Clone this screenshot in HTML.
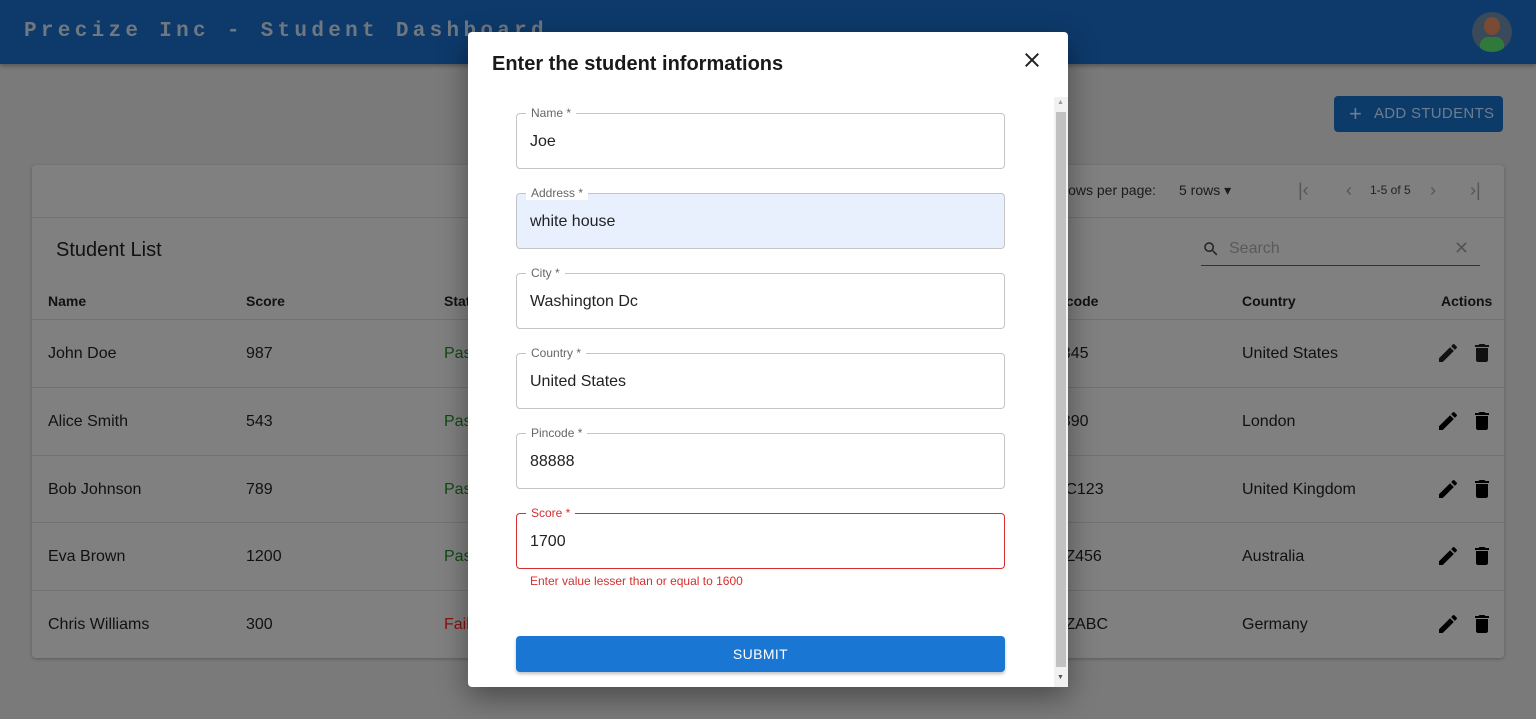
<!DOCTYPE html>
<html><head><meta charset="utf-8"><style>
*{box-sizing:border-box;margin:0;padding:0}
body{width:1536px;height:719px;overflow:hidden;background:#7a7a7a;font-family:"Liberation Sans",sans-serif;position:relative}
.abs{position:absolute}
.hdr{left:0;top:0;width:1536px;height:64px;background:#0d3a6b;box-shadow:0 2px 4px rgba(0,0,0,.3)}
.title{left:24px;top:20px;font-family:"Liberation Mono",monospace;font-weight:bold;font-size:21px;letter-spacing:4.3px;color:#6f7780}
.card{left:32px;top:165px;width:1472px;height:493px;background:#808080;border-radius:4px;box-shadow:0 1px 3px rgba(0,0,0,.25)}
.t{position:absolute;font-size:16px;color:#111}
.th{position:absolute;font-size:14px;font-weight:bold;color:#111}
.line{position:absolute;left:0;width:1472px;height:1px;background:#727272}
.modal{left:468px;top:32px;width:600px;height:655px;background:#fff;border-radius:4px;box-shadow:0 10px 30px rgba(0,0,0,.4)}
.fld{position:absolute;left:48px;width:489px;height:56px;border:1px solid #c4c4c4;border-radius:4px}
.fld .lb{position:absolute;left:9px;top:-8px;background:#fff;padding:0 5px;font-size:12px;color:#666;line-height:14px}
.fld .v{position:absolute;left:13px;top:19px;font-size:16px;color:#222}
</style></head><body>
<div class="abs hdr"></div>
<div class="abs title">Precize Inc - Student Dashboard</div>
<div class="abs" style="left:1472px;top:12px;width:40px;height:40px;border-radius:50%;background:#3a4a5a;overflow:hidden">
<div style="position:absolute;left:12px;top:5px;width:16px;height:18px;border-radius:50%;background:#7a4a33"></div>
<div style="position:absolute;left:8px;top:25px;width:24px;height:16px;border-radius:8px 8px 0 0;background:#2f7a3a"></div>
</div>
<div class="abs" style="left:1334px;top:96px;width:169px;height:36px;background:#0d3b69;border-radius:4px;color:#6c7d90;font-size:15px;line-height:36px;padding-left:40px;letter-spacing:.3px">ADD STUDENTS</div>
<div class="abs" style="left:1349px;top:104px;font-size:22px;color:#6c7d90;line-height:20px">+</div>

<div class="abs card">
 <div class="t" style="left:1026px;top:17px;font-size:14px;color:#1a1a1a">Rows per page:</div>
 <div class="t" style="left:1147px;top:17px;font-size:14px;color:#1a1a1a">5 rows ▾</div>
 <div class="t" style="left:1266px;top:15px;font-size:18px;color:#555">|‹</div>
 <div class="t" style="left:1314px;top:15px;font-size:18px;color:#555">‹</div>
 <div class="t" style="left:1338px;top:18px;font-size:12px;color:#222">1-5 of 5</div>
 <div class="t" style="left:1398px;top:15px;font-size:18px;color:#555">›</div>
 <div class="t" style="left:1438px;top:15px;font-size:18px;color:#555">›|</div>
 <div class="line" style="top:52px"></div>
 <div class="t" style="left:24px;top:74px;font-size:20px">Student List</div>
 <svg class="abs" style="left:1170px;top:75px" width="18" height="18" viewBox="0 0 24 24"><path d="M15.5 14h-.79l-.28-.27A6.5 6.5 0 1 0 9.5 16a6.47 6.47 0 0 0 4.23-1.57l.27.28v.79l5 4.99L20.49 19zm-6 0C7.01 14 5 11.99 5 9.5S7.01 5 9.5 5 14 7.01 14 9.5 11.99 14 9.5 14" fill="#222"/></svg>
 <div class="t" style="left:1197px;top:75px;color:#5a5a5a">Search</div>
 <div class="t" style="left:1422px;top:73px;font-size:18px;color:#555">✕</div>
 <div class="abs" style="left:1169px;top:100px;width:279px;height:1px;background:#333"></div>
 <div class="th" style="left:16px;top:128px">Name</div>
 <div class="th" style="left:214px;top:128px">Score</div>
 <div class="th" style="left:412px;top:128px">Status</div>
 <div class="th" style="left:1012px;top:128px">Pincode</div>
 <div class="th" style="left:1210px;top:128px">Country</div>
 <div class="th" style="left:1409px;top:128px">Actions</div>
 <div class="line" style="top:154px"></div>
 <div class="line" style="top:222px"></div>
 <div class="line" style="top:290px"></div>
 <div class="line" style="top:357px"></div>
 <div class="line" style="top:425px"></div>
 <div class="t" style="left:16px;top:180px">John Doe</div><div class="t" style="left:214px;top:180px">987</div><div class="t" style="left:412px;top:180px;color:#0d4a12">Pass</div><div class="t" style="left:1012px;top:180px">12345</div><div class="t" style="left:1210px;top:180px">United States</div>
 <div class="t" style="left:16px;top:248px">Alice Smith</div><div class="t" style="left:214px;top:248px">543</div><div class="t" style="left:412px;top:248px;color:#0d4a12">Pass</div><div class="t" style="left:1012px;top:248px">67890</div><div class="t" style="left:1210px;top:248px">London</div>
 <div class="t" style="left:16px;top:316px">Bob Johnson</div><div class="t" style="left:214px;top:316px">789</div><div class="t" style="left:412px;top:316px;color:#0d4a12">Pass</div><div class="t" style="left:1012px;top:316px">ABC123</div><div class="t" style="left:1210px;top:316px">United Kingdom</div>
 <div class="t" style="left:16px;top:383px">Eva Brown</div><div class="t" style="left:214px;top:383px">1200</div><div class="t" style="left:412px;top:383px;color:#0d4a12">Pass</div><div class="t" style="left:1012px;top:383px">XYZ456</div><div class="t" style="left:1210px;top:383px">Australia</div>
 <div class="t" style="left:16px;top:451px">Chris Williams</div><div class="t" style="left:214px;top:451px">300</div><div class="t" style="left:412px;top:451px;color:#8a0f0f">Fail</div><div class="t" style="left:1012px;top:451px">XYZABC</div><div class="t" style="left:1210px;top:451px">Germany</div>
 <svg class="abs" style="left:1404px;top:176px" width="24" height="300" viewBox="0 0 24 300">
  <g fill="#111"><path id="p" d="M3 17.25V21h3.75L17.81 9.94l-3.75-3.75zM20.71 7.04a1 1 0 0 0 0-1.41l-2.34-2.34a1 1 0 0 0-1.41 0l-1.83 1.83 3.75 3.75z"/></g>
  <use href="#p" y="68"/><use href="#p" y="136"/><use href="#p" y="203"/><use href="#p" y="271"/>
 </svg>
 <svg class="abs" style="left:1438px;top:176px" width="24" height="300" viewBox="0 0 24 300">
  <g fill="#111"><path id="d" d="M6 19c0 1.1.9 2 2 2h8c1.1 0 2-.9 2-2V7H6zM19 4h-3.5l-1-1h-5l-1 1H5v2h14z"/></g>
  <use href="#d" y="68"/><use href="#d" y="136"/><use href="#d" y="203"/><use href="#d" y="271"/>
 </svg>
</div>

<div class="abs modal">
 <div class="abs" style="left:24px;top:21px;font-size:20px;font-weight:bold;color:#1a1a1a">Enter the student informations</div>
 <svg class="abs" style="left:552px;top:16px" width="24" height="24" viewBox="0 0 24 24"><path d="M19 6.41 17.59 5 12 10.59 6.41 5 5 6.41 10.59 12 5 17.59 6.41 19 12 13.41 17.59 19 19 17.59 13.41 12z" fill="#222"/></svg>
 <div class="abs" style="left:586px;top:65px;width:14px;height:590px;background:#f1f1f1"></div>
 <div class="abs" style="left:588px;top:80px;width:10px;height:555px;background:#c1c1c1"></div>
 <div class="abs" style="left:589px;top:67px;font-size:7px;color:#999">▲</div>
 <div class="abs" style="left:589px;top:642px;font-size:7px;color:#555">▼</div>
 <div class="fld" style="top:81px"><span class="lb">Name *</span><span class="v">Joe</span></div>
 <div class="fld" style="top:161px;background:#e8f0fe"><span class="lb">Address *</span><span class="v">white house</span></div>
 <div class="fld" style="top:241px"><span class="lb">City *</span><span class="v">Washington Dc</span></div>
 <div class="fld" style="top:321px"><span class="lb">Country *</span><span class="v">United States</span></div>
 <div class="fld" style="top:401px"><span class="lb">Pincode *</span><span class="v">88888</span></div>
 <div class="fld" style="top:481px;border-color:#d32f2f"><span class="lb" style="color:#d32f2f">Score *</span><span class="v">1700</span></div>
 <div class="abs" style="left:62px;top:542px;font-size:12px;color:#d32f2f">Enter value lesser than or equal to 1600</div>
 <div class="abs" style="left:48px;top:604px;width:489px;height:36px;background:#1976d2;border-radius:4px;color:#fff;font-size:14px;text-align:center;line-height:36px;letter-spacing:.4px;box-shadow:0 2px 3px rgba(0,0,0,.25)">SUBMIT</div>
</div>
</body></html>
